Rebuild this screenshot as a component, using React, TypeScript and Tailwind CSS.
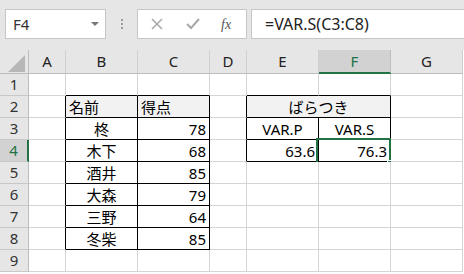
import { Fragment } from "react";

type Cell = {
  text?: string;
  align?: "l" | "c" | "r";
  head?: boolean;
  rb?: boolean;
  bb?: boolean;
  span?: boolean;
  sel?: boolean;
};

const cols = ["A", "B", "C", "D", "E", "F", "G"];

// 1行目〜9行目（A〜G列）
const rows: Cell[][] = [
  [{}, { bb: true }, { bb: true }, {}, { bb: true }, { bb: true }, {}],
  [
    { rb: true },
    { text: "名前", align: "l", head: true, rb: true, bb: true },
    { text: "得点", align: "l", head: true, rb: true, bb: true },
    { rb: true },
    { text: "ばらつき", align: "c", head: true, rb: true, bb: true, span: true },
    {},
  ],
  [
    { rb: true },
    { text: "柊", align: "c", rb: true, bb: true },
    { text: "78", align: "r", rb: true, bb: true },
    { rb: true },
    { text: "VAR.P", align: "c", rb: true, bb: true },
    { text: "VAR.S", align: "c", rb: true, bb: true },
    {},
  ],
  [
    { rb: true },
    { text: "木下", align: "c", rb: true, bb: true },
    { text: "68", align: "r", rb: true, bb: true },
    { rb: true },
    { text: "63.6", align: "r", rb: true, bb: true },
    { text: "76.3", align: "r", rb: true, bb: true, sel: true },
    {},
  ],
  [
    { rb: true },
    { text: "酒井", align: "c", rb: true, bb: true },
    { text: "85", align: "r", rb: true, bb: true },
    {}, {}, {}, {},
  ],
  [
    { rb: true },
    { text: "大森", align: "c", rb: true, bb: true },
    { text: "79", align: "r", rb: true, bb: true },
    {}, {}, {}, {},
  ],
  [
    { rb: true },
    { text: "三野", align: "c", rb: true, bb: true },
    { text: "64", align: "r", rb: true, bb: true },
    {}, {}, {}, {},
  ],
  [
    { rb: true },
    { text: "冬柴", align: "c", rb: true, bb: true },
    { text: "85", align: "r", rb: true, bb: true },
    {}, {}, {}, {},
  ],
  [{}, {}, {}, {}, {}, {}, {}],
];

function DataCell({ c }: { c: Cell }) {
  return (
    <div
      className={`relative flex h-[22px] items-center border-r border-b px-[3px] pt-[1px] text-[15px] text-black ${
        c.rb ? "border-r-black" : "border-r-[#d4d4d4]"
      } ${c.bb ? "border-b-black" : "border-b-[#d4d4d4]"} ${
        c.head ? "bg-[#f2f2f2]" : "bg-white"
      } ${c.span ? "col-span-2" : ""} ${
        c.align === "c" ? "justify-center" : c.align === "r" ? "justify-end" : "justify-start"
      }`}
    >
      {c.text}
      {c.sel && (
        <div className="absolute -left-[3px] -top-[2px] h-[26px] w-[75px] border-2 border-[#217346]">
          <div className="absolute -bottom-[4px] -right-[4px] h-[6px] w-[6px] border border-white bg-[#217346]" />
        </div>
      )}
    </div>
  );
}

export default function App() {
  return (
    <div
      className="h-[274px] w-[464px] overflow-hidden bg-white"
      style={{ fontFamily: '"Noto Sans", "Noto Sans CJK JP", sans-serif' }}
    >
      {/* 数式バー */}
      <div className="flex h-[50px] items-start bg-[#e6e6e6] pt-[9px] pl-[5px]">
        <div className="flex h-[30px] w-[101px] items-center justify-between border border-[#c6c6c6] bg-white pl-[7px] pr-[6px] text-[15px] text-[#333]">
          <span>F4</span>
          <span className="h-0 w-0 border-x-[4px] border-t-[4px] border-x-transparent border-t-[#777]" />
        </div>
        <div className="flex h-[30px] w-[31px] flex-col items-center justify-center gap-[2px]">
          <span className="h-[2px] w-[2px] bg-[#9a9a9a]" />
          <span className="h-[2px] w-[2px] bg-[#9a9a9a]" />
          <span className="h-[2px] w-[2px] bg-[#9a9a9a]" />
        </div>
        <div className="flex h-[30px] w-[110px] items-center border border-[#c6c6c6] bg-white">
          <svg width="12" height="12" viewBox="0 0 12 12" className="ml-[13px]">
            <path d="M1 1 L11 11 M11 1 L1 11" stroke="#a8a8a8" strokeWidth="1.5" />
          </svg>
          <svg width="14" height="12" viewBox="0 0 14 12" className="ml-[23px]">
            <path d="M1 6 L5 10 L13 1" stroke="#a8a8a8" strokeWidth="2" fill="none" />
          </svg>
          <span
            className="ml-[21px] text-[14px] italic text-[#555]"
            style={{ fontFamily: '"Liberation Serif", serif' }}
          >
            fx
          </span>
        </div>
        <div className="ml-[4px] flex h-[30px] flex-1 items-center border border-r-0 border-[#c6c6c6] bg-white pl-[13px] text-[16px] text-[#222]">
          =VAR.S(C3:C8)
        </div>
      </div>

      {/* シート */}
      <div className="grid grid-cols-[29px_37px_72px_72px_37px_72px_72px_72px]">
        <div className="relative h-[24px] border-r border-b border-[#bdbdbd] bg-[#e6e6e6]">
          <svg width="18" height="17" viewBox="0 0 18 17" className="absolute left-[8px] top-[5px]">
            <polygon points="0,17 17,17 17,0" fill="#b7b7b7" />
          </svg>
        </div>
        {cols.map((c) => (
          <div
            key={c}
            className={`flex h-[24px] items-center justify-center border-r border-b text-[15px] ${
              c === "F"
                ? "border-r-[#bdbdbd] border-b-2 border-b-[#217346] bg-[#d2d2d2] text-[#217346]"
                : "border-r-[#d0d0d0] border-b-[#bdbdbd] bg-[#e6e6e6] text-[#222]"
            }`}
          >
            {c}
          </div>
        ))}
        {rows.map((r, i) => (
          <Fragment key={i}>
            <div
              className={`flex h-[22px] items-center justify-center border-b border-r text-[15px] ${
                i === 3
                  ? "border-b-[#c8c8c8] border-r-2 border-r-[#217346] bg-[#d2d2d2] text-[#217346]"
                  : "border-b-[#c8c8c8] border-r-[#bdbdbd] bg-[#e6e6e6] text-[#333]"
              }`}
            >
              {i + 1}
            </div>
            {r.map((c, j) => (
              <DataCell key={j} c={c} />
            ))}
          </Fragment>
        ))}
      </div>
    </div>
  );
}
